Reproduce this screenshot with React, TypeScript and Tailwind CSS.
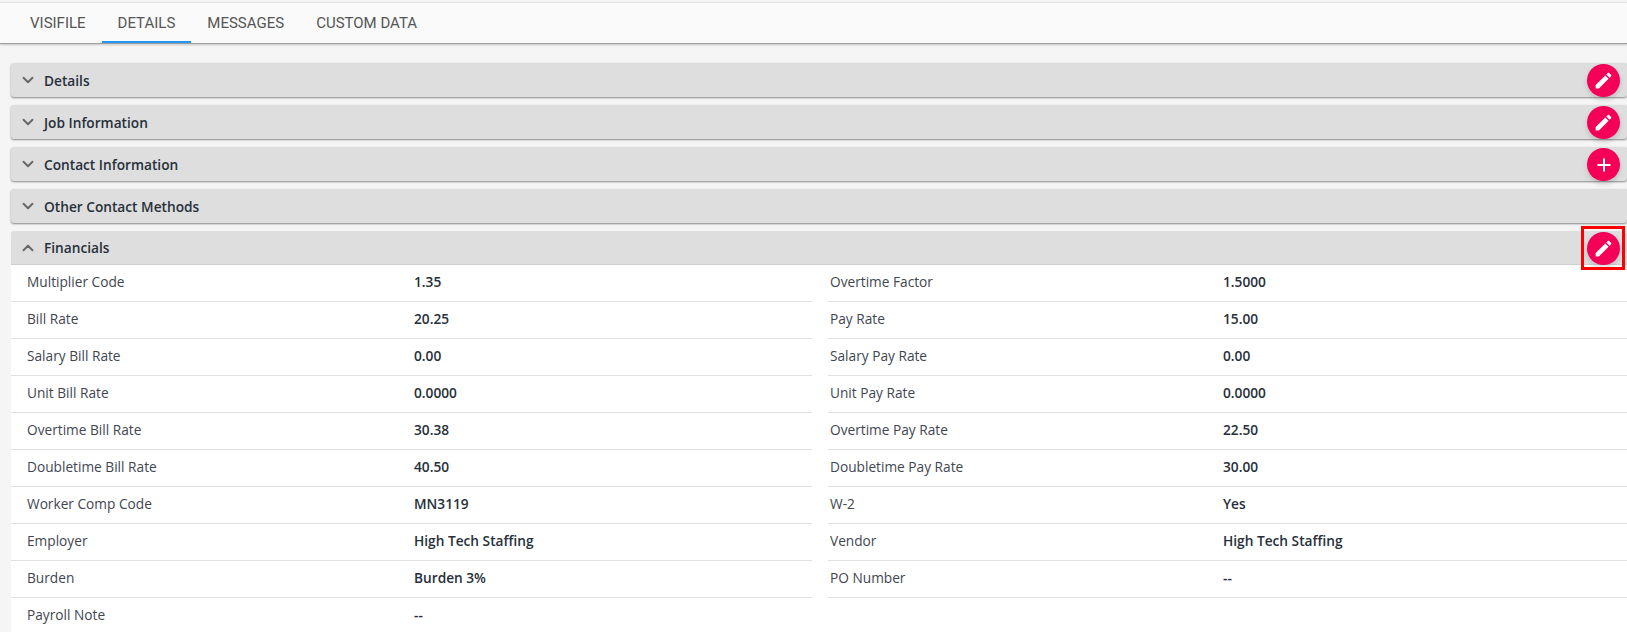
import { ChevronDown, ChevronUp, Plus } from "lucide-react";

const tabs = ["VISIFILE", "DETAILS", "MESSAGES", "CUSTOM DATA"];

const rows: [string, string][] = [
  ["Multiplier Code", "1.35"],
  ["Overtime Factor", "1.5000"],
  ["Bill Rate", "20.25"],
  ["Pay Rate", "15.00"],
  ["Salary Bill Rate", "0.00"],
  ["Salary Pay Rate", "0.00"],
  ["Unit Bill Rate", "0.0000"],
  ["Unit Pay Rate", "0.0000"],
  ["Overtime Bill Rate", "30.38"],
  ["Overtime Pay Rate", "22.50"],
  ["Doubletime Bill Rate", "40.50"],
  ["Doubletime Pay Rate", "30.00"],
  ["Worker Comp Code", "MN3119"],
  ["W-2", "Yes"],
  ["Employer", "High Tech Staffing"],
  ["Vendor", "High Tech Staffing"],
  ["Burden", "Burden 3%"],
  ["PO Number", "--"],
  ["Payroll Note", "--"],
];

function PencilIcon() {
  return (
    <svg viewBox="0 0 24 24" className="h-[21px] w-[21px] fill-white">
      <path d="M3 17.25V21h3.75L17.81 9.94l-3.75-3.75L3 17.25zM20.71 7.04a1 1 0 0 0 0-1.41l-2.34-2.34a1 1 0 0 0-1.41 0l-1.83 1.83 3.75 3.75 1.83-1.83z" />
    </svg>
  );
}

function Fab({ icon }: { icon: "edit" | "add" }) {
  return (
    <button className="absolute right-[7px] top-[1px] flex h-[33px] w-[33px] items-center justify-center rounded-full bg-[#f50057] shadow-[0_3px_5px_rgba(0,0,0,0.15)]">
      {icon === "edit" ? <PencilIcon /> : <Plus className="h-[20px] w-[20px] text-white" strokeWidth={2.4} />}
    </button>
  );
}

function Section({
  title,
  icon,
  open,
}: {
  title: string;
  icon?: "edit" | "add";
  open?: boolean;
}) {
  return (
    <div
      className={`relative flex h-[34px] items-center rounded-t-[3px] bg-[#dedede] pl-[8px] ${
        open
          ? "border-b border-[#cfcfcf]"
          : "rounded-b-[3px] shadow-[0_1px_2px_rgba(0,0,0,0.45)]"
      }`}
    >
      {open ? (
        <ChevronUp className="h-[18px] w-[18px] text-[#666]" strokeWidth={2.5} />
      ) : (
        <ChevronDown className="h-[18px] w-[18px] text-[#666]" strokeWidth={2.5} />
      )}
      <span className="ml-[7px] pt-[2px] text-[13.7px] font-semibold text-[#27303a]">{title}</span>
      {icon ? <Fab icon={icon} /> : null}
    </div>
  );
}

export default function App() {
  return (
    <div className="h-[632px] overflow-hidden bg-[#f5f5f5] pt-[2px] font-['Open_Sans',sans-serif] text-[14px]">
      <div className="flex h-[42px] border-y border-t-[#e4e4e4] border-b-[#9e9e9e] bg-[#fafafa] pl-[14px] font-['Roboto',sans-serif] shadow-[0_1px_2px_rgba(0,0,0,0.2)]">
        {tabs.map((t) => (
          <div
            key={t}
            className={`flex items-center px-[16px] pt-[3px] text-[15px] text-[#555] ${
              t === "DETAILS" ? "border-b-2 border-[#2196f3]" : "border-b-2 border-transparent"
            }`}
          >
            {t}
          </div>
        ))}
      </div>

      <div className="flex flex-col gap-[8px] pl-[11px] pt-[19px]">
        <Section title="Details" icon="edit" />
        <Section title="Job Information" icon="edit" />
        <Section title="Contact Information" icon="add" />
        <Section title="Other Contact Methods" />
        <div className="relative">
          <Section title="Financials" icon="edit" open />
          <div className="absolute right-[2px] top-[-5px] h-[44px] w-[44px] border-[3px] border-[#ff0000]" />
          <div className="grid grid-cols-[801px_799px] gap-x-[16px] bg-white">
            {rows.map(([label, value], i) => (
              <div
                key={label}
                className="flex h-[37px] items-center border-b border-[#e0e0e0] pb-[3px] text-[13.7px] leading-none"
              >
                <span
                  className={
                    i % 2 === 0
                      ? "w-[403px] pl-[16px] text-[#3f4650]"
                      : "w-[395px] pl-[2px] text-[#3f4650]"
                  }
                >
                  {label}
                </span>
                <span className="font-semibold text-[#27303a]">{value}</span>
              </div>
            ))}
          </div>
        </div>
      </div>
    </div>
  );
}
